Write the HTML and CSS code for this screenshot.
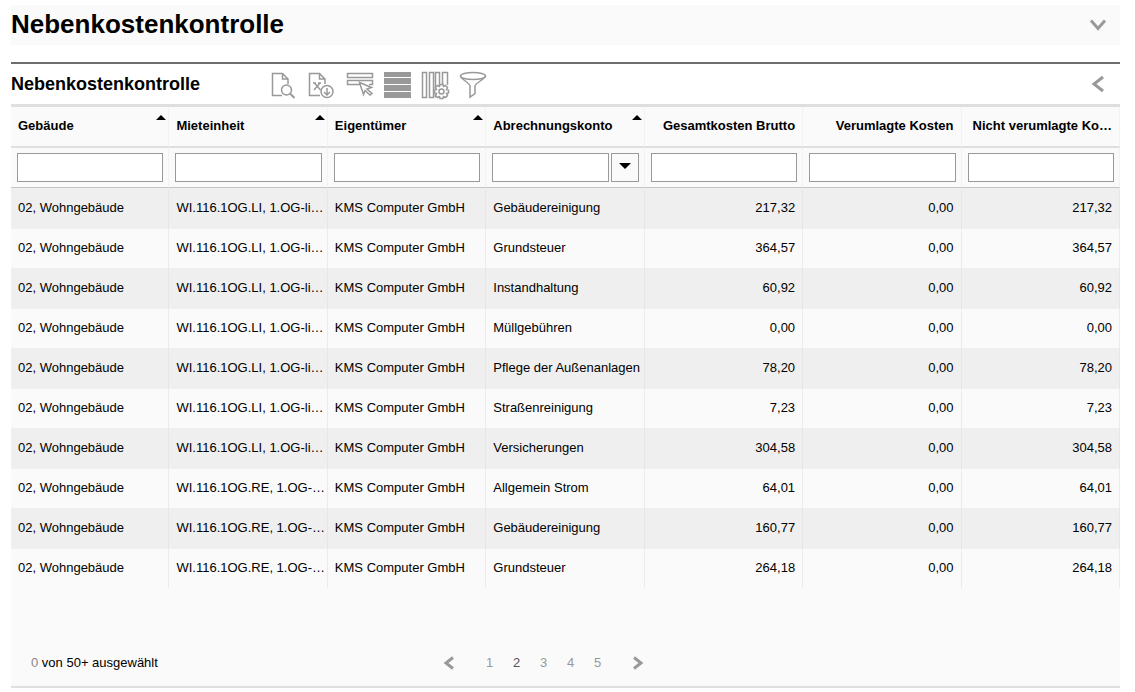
FILE: index.html
```html
<!DOCTYPE html>
<html lang="de">
<head>
<meta charset="utf-8">
<title>Nebenkostenkontrolle</title>
<link rel="stylesheet" href="styles.css">
</head>
<body>
<header class="page-header">
  <h1 class="page-title">Nebenkostenkontrolle</h1>
  <button class="icon-button" type="button" aria-label="Einklappen"><svg width="18" height="14" viewBox="0 0 18 14"><path class="chevron" d="M2 2.500L9 10.500l7-8"/></svg></button>
</header>
<main class="panel">
  <div class="panel-bar">
    <h2 class="panel-title">Nebenkostenkontrolle</h2>
    <div class="tools">
      <button class="icon-button" type="button" aria-label="Vorschau"><svg width="28" height="28" viewBox="0 0 28 28"><path class="line" d="M13 24.500H3.500V2.500h10l5.500 5.500v5M13.500 2.500V8H19"/><circle class="line" cx="17.500" cy="19" r="5"/><path class="thick" d="M21 22.500l4.500 4.500"/></svg></button>
      <button class="icon-button" type="button" aria-label="Exportieren"><svg width="28" height="28" viewBox="0 0 28 28"><path class="line" d="M13 24.500H2.500V2.500h10l5.500 5.500v5M12.500 2.500V8H18M7.500 12l6 7M13 12l-6 7M6 12h3M11 12h3"/><circle class="mask" cx="20" cy="20.500" r="6"/><path class="line" d="M20 17v7M17 21l3 3 3-3"/></svg></button>
      <button class="icon-button" type="button" aria-label="Auswahl"><svg width="28" height="28" viewBox="-2 0 28 28"><path class="line" d="M.5 2.500h25v4H.5zM14 13.500H.5v-4h25v4H22"/><path class="mask" d="M12.500 11.500l12 5-4.500 1.500 5 4.500-2 1.500-5-4.500-1.500 4z"/></svg></button>
      <button class="icon-button" type="button" aria-label="Zeilen"><svg width="28" height="28" viewBox="-1 0 28 28"><path class="solid" d="M0 1h27v5H0zM0 7h27v6H0zM0 14h27v6H0zM0 21h27v6H0z"/></svg></button>
      <button class="icon-button" type="button" aria-label="Spalten"><svg width="28" height="28" viewBox="-1 0 28 28"><path class="line" d="M.5 1.500h4v25h-4zM7.500 1.500h4v25h-4zM13.500 26.500v-25h4V14M20.500 13V1.500h5V14"/><path class="mask" d="M18 13.500h3l.5 2 2-1 2 2-1 2 2 .5v3l-2 .5 1 2-2 2-2-1-.5 2h-3l-.5-2-2 1-2-2 1-2-2-.5v-3l2-.5-1-2 2-2 2 1z"/><circle class="line" cx="19.500" cy="20.500" r="2.500"/></svg></button>
      <button class="icon-button" type="button" aria-label="Filter"><svg width="28" height="28" viewBox="0 0 28 28"><ellipse class="line" cx="14" cy="5" rx="12.500" ry="3.500"/><path class="line" d="M1.500 5c0 3 9.500 7 9.500 10v11l5-3.500V15c0-3 10.500-7 10.500-10"/></svg></button>
    </div>
    <button class="icon-button" type="button" aria-label="Seitenbereich öffnen"><svg width="18" height="18" viewBox="0 0 18 18"><path class="chevron" d="M14 2L5 9l9 7"/></svg></button>
  </div>
  <div class="panel-body">
    <table class="grid">
      <thead>
        <tr class="heads">
          <th scope="col"><span class="sort"></span>Gebäude</th>
          <th scope="col"><span class="sort"></span>Mieteinheit</th>
          <th scope="col"><span class="sort"></span>Eigentümer</th>
          <th scope="col"><span class="sort"></span>Abrechnungskonto</th>
          <th scope="col" class="num">Gesamtkosten Brutto</th>
          <th scope="col" class="num">Verumlagte Kosten</th>
          <th scope="col" class="num">Nicht verumlagte Ko…</th>
        </tr>
        <tr class="filters">
          <td><input class="field" type="text" aria-label="Gebäude"></td>
          <td><input class="field" type="text" aria-label="Mieteinheit"></td>
          <td><input class="field" type="text" aria-label="Eigentümer"></td>
          <td><div class="combo"><input class="field" type="text" aria-label="Abrechnungskonto"><button class="drop" type="button" aria-label="Konto wählen"><span class="caret"></span></button></div></td>
          <td><input class="field" type="text" aria-label="Gesamtkosten Brutto"></td>
          <td><input class="field" type="text" aria-label="Verumlagte Kosten"></td>
          <td><input class="field" type="text" aria-label="Nicht verumlagte Kosten"></td>
        </tr>
      </thead>
      <tbody>
        <tr><td>02, Wohngebäude</td><td>WI.116.1OG.LI, 1.OG-li…</td><td>KMS Computer GmbH</td><td>Gebäudereinigung</td><td class="num">217,32</td><td class="num">0,00</td><td class="num">217,32</td></tr>
        <tr><td>02, Wohngebäude</td><td>WI.116.1OG.LI, 1.OG-li…</td><td>KMS Computer GmbH</td><td>Grundsteuer</td><td class="num">364,57</td><td class="num">0,00</td><td class="num">364,57</td></tr>
        <tr><td>02, Wohngebäude</td><td>WI.116.1OG.LI, 1.OG-li…</td><td>KMS Computer GmbH</td><td>Instandhaltung</td><td class="num">60,92</td><td class="num">0,00</td><td class="num">60,92</td></tr>
        <tr><td>02, Wohngebäude</td><td>WI.116.1OG.LI, 1.OG-li…</td><td>KMS Computer GmbH</td><td>Müllgebühren</td><td class="num">0,00</td><td class="num">0,00</td><td class="num">0,00</td></tr>
        <tr><td>02, Wohngebäude</td><td>WI.116.1OG.LI, 1.OG-li…</td><td>KMS Computer GmbH</td><td>Pflege der Außenanlagen</td><td class="num">78,20</td><td class="num">0,00</td><td class="num">78,20</td></tr>
        <tr><td>02, Wohngebäude</td><td>WI.116.1OG.LI, 1.OG-li…</td><td>KMS Computer GmbH</td><td>Straßenreinigung</td><td class="num">7,23</td><td class="num">0,00</td><td class="num">7,23</td></tr>
        <tr><td>02, Wohngebäude</td><td>WI.116.1OG.LI, 1.OG-li…</td><td>KMS Computer GmbH</td><td>Versicherungen</td><td class="num">304,58</td><td class="num">0,00</td><td class="num">304,58</td></tr>
        <tr><td>02, Wohngebäude</td><td>WI.116.1OG.RE, 1.OG-…</td><td>KMS Computer GmbH</td><td>Allgemein Strom</td><td class="num">64,01</td><td class="num">0,00</td><td class="num">64,01</td></tr>
        <tr><td>02, Wohngebäude</td><td>WI.116.1OG.RE, 1.OG-…</td><td>KMS Computer GmbH</td><td>Gebäudereinigung</td><td class="num">160,77</td><td class="num">0,00</td><td class="num">160,77</td></tr>
        <tr><td>02, Wohngebäude</td><td>WI.116.1OG.RE, 1.OG-…</td><td>KMS Computer GmbH</td><td>Grundsteuer</td><td class="num">264,18</td><td class="num">0,00</td><td class="num">264,18</td></tr>
      </tbody>
    </table>
    <footer class="footer">
      <p class="count"><span class="muted">0</span> von 50+ ausgewählt</p>
      <nav class="pager" aria-label="Seiten">
        <button class="icon-button" type="button" aria-label="Zurück"><svg width="12" height="14" viewBox="0 0 12 14"><path class="chevron" d="M10 1.500L3 7l7 5.500"/></svg></button>
        <div class="pages">
          <a href="#p1">1</a><a href="#p2" class="current" aria-current="page">2</a><a href="#p3">3</a><a href="#p4">4</a><a href="#p5">5</a>
        </div>
        <button class="icon-button" type="button" aria-label="Weiter"><svg width="12" height="14" viewBox="0 0 12 14"><path class="chevron" d="M2 1.500L9 7l-7 5.500"/></svg></button>
      </nav>
    </footer>
  </div>
</main>
</body>
</html>
```
FILE: styles.css
```css
* { box-sizing: border-box; }
body {
  margin: 0;
  padding: 5px 15px 4px 11px;
  background: #fff;
  color: #000;
  font: 13px/16px "Liberation Sans", Arial, sans-serif;
}
h1, h2, p { margin: 0; }
.page-header {
  display: flex;
  align-items: center;
  justify-content: space-between;
  height: 40px;
  padding-right: 13px;
  background: #fafafa;
}
.page-title { font-size: 26px; line-height: 38px; align-self: flex-start; }
.icon-button {
  display: flex;
  padding: 0;
  border: 0;
  background: none;
}
.icon-button svg { overflow: visible; }
.chevron { fill: none; stroke: #999; stroke-width: 3; }
.line { fill: none; stroke: #999; stroke-width: 1.5; }
.thick { fill: none; stroke: #999; stroke-width: 2; }
.mask { fill: #fff; stroke: #999; stroke-width: 1.5; }
.solid { fill: #999; }
.panel { margin-top: 17px; border-top: 2px solid #6e6e6e; }
.panel-bar {
  display: flex;
  align-items: center;
  height: 40px;
  padding-right: 13px;
}
.panel-title { width: 258px; font-size: 18px; line-height: 20px; }
.tools { display: flex; flex: 1; gap: 10px; padding-top: 2px; }
.panel-body {
  border-top: 3px solid #dfdfdf;
  border-bottom: 2px solid #dfdfdf;
  background: #fafafa;
}
.grid {
  width: 100%;
  table-layout: fixed;
  border-collapse: separate;
  border-spacing: 0;
}
.grid th, .grid td {
  height: 40px;
  padding: 0 1px 0 7px;
  border-right: 1px solid #ebebeb;
  text-align: left;
  white-space: nowrap;
}
.grid .num { padding-right: 7px; padding-left: 2px; text-align: right; }
.grid .heads th {
  height: 41px;
  padding-bottom: 2px;
  border-bottom: 2px solid #dfdfdf;
  border-right-color: #f2f2f2;
}
.sort, .caret { border: 5px solid transparent; }
.sort { float: right; margin: -3px 1px 0 0; border-top: 0; border-bottom-color: #000; }
.grid .filters td {
  padding: 0 5px 0 6px;
  border-bottom: 1px solid #c4c4c4;
  border-right-color: #f2f2f2;
}
.field {
  display: block;
  width: 100%;
  min-width: 0;
  height: 29px;
  padding: 0 4px;
  border: 1px solid #999;
  background: #fff;
  font: inherit;
}
.combo { display: flex; gap: 2px; }
.drop {
  display: flex;
  flex: none;
  align-items: center;
  justify-content: center;
  width: 28px;
  height: 29px;
  padding: 0;
  border: 1px solid #999;
  background: #fafafa;
}
.caret { border-width: 6px 6px 0; border-top-color: #000; margin-bottom: 4px; }
.grid tbody tr:nth-child(odd) { background: #efefef; }
.grid tbody tr:nth-child(odd) td { border-right-color: #e6e6e6; }
.grid tbody tr:nth-child(even) td { border-top: 1px solid #efefef; padding-bottom: 1px; }
.footer {
  display: grid;
  grid-template-columns: 1fr auto 1fr;
  align-items: center;
  height: 98px;
  padding: 52px 20px 0;
}
.pager { display: flex; align-items: center; gap: 21px; margin-right: 44px; }
.pages { display: flex; }
.pages a { width: 27px; color: #999; text-align: center; text-decoration: none; }
.pages .current { color: #555; }
.muted { color: #888; }
```
